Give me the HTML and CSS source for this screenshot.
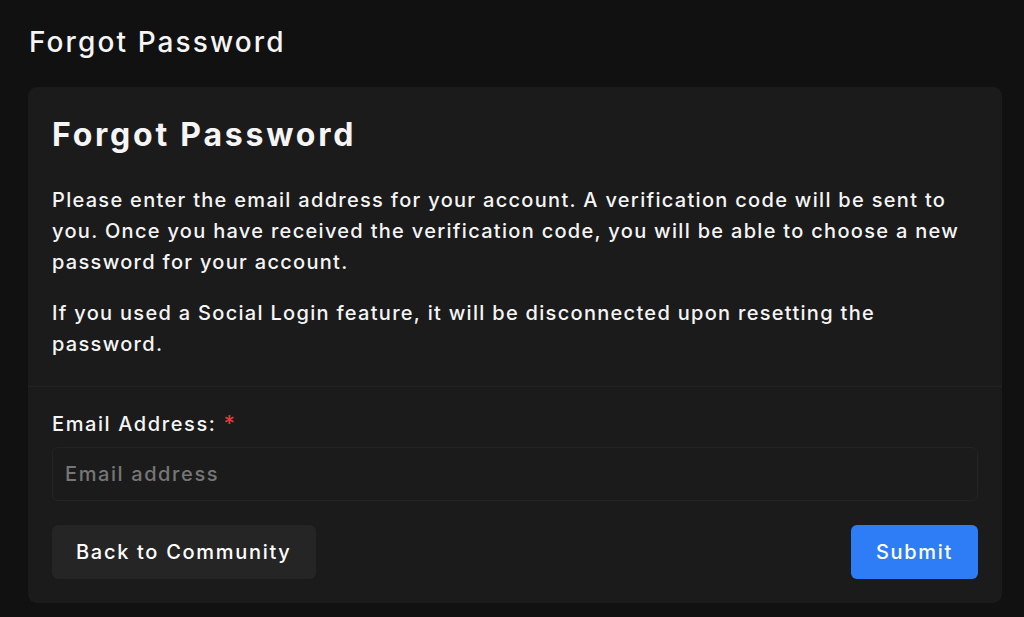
FILE: index.html
```html
<!DOCTYPE html>
<html lang="en">
<head>
<meta charset="utf-8">
<title>Forgot Password</title>
<link rel="stylesheet" href="styles.css">
</head>
<body>
<div class="page">
  <h1 class="page-title">Forgot Password</h1>
  <div class="card">
    <div class="card-body">
      <h2 class="card-title">Forgot Password</h2>
      <p class="text">Please enter the email address for your account. A verification code will be sent to you. Once you have received the verification code, you will be able to choose a new password for your account.</p>
      <p class="text">If you used a Social Login feature, it will be disconnected upon resetting the password.</p>
    </div>
    <div class="card-form">
      <label class="label" for="email">Email Address: <span class="req">*</span></label>
      <input class="input" id="email" type="email" placeholder="Email address">
      <div class="actions">
        <button class="btn btn-secondary" type="button">Back to Community</button>
        <button class="btn btn-primary" type="submit">Submit</button>
      </div>
    </div>
  </div>
</div>
</body>
</html>
```
FILE: styles.css
```css
html, body {
  margin: 0;
  padding: 0;
  background: #111111;
  color: #f5f5f5;
  font-family: Inter, "Noto Sans", sans-serif;
  font-weight: 500;
}
.page {
  padding: 0 22px 0 28px;
}
.page-title {
  margin: 0;
  padding: 22px 0 0 1px;
  font-size: 28px;
  font-weight: 500;
  letter-spacing: 0.075em;
  line-height: 40px;
  height: 65px;
}
.card {
  background: #1b1b1b;
  border-radius: 9px;
}
.card-body {
  padding: 26px 24px 6px 24px;
  border-bottom: 1px solid #232323;
}
.card-title {
  margin: 0 0 28px 0;
  font-size: 32px;
  font-weight: 700;
  letter-spacing: 0.087em;
  line-height: 44px;
}
.text {
  margin: 0 0 20px 0;
  font-size: 20px;
  line-height: 31px;
  letter-spacing: 0.065em;
}
.card-form {
  padding: 21px 24px 24px 24px;
}
.label {
  display: block;
  font-size: 20px;
  line-height: 30px;
  letter-spacing: 0.08em;
  margin-bottom: 8px;
}
.req {
  color: #e23b3b;
  font-size: 22px;
}
.input {
  display: block;
  box-sizing: border-box;
  width: 100%;
  height: 54px;
  padding: 0 12px;
  background: #1b1b1b;
  border: 1px solid #232323;
  border-radius: 6px;
  color: #fff;
  font-family: inherit;
  font-weight: 500;
  font-size: 20px;
  letter-spacing: 0.08em;
  outline: none;
}
.input::placeholder {
  color: #767676;
}
.actions {
  display: flex;
  justify-content: space-between;
  margin-top: 24px;
}
.btn {
  height: 54px;
  border: none;
  border-radius: 6px;
  font-family: inherit;
  font-weight: 500;
  font-size: 20px;
  letter-spacing: 0.085em;
  color: #fff;
  padding: 0 24px;
  cursor: pointer;
}
.btn-secondary {
  background: #252525;
}
.btn-primary {
  background: #2f7df6;
  padding: 0 25px;
}
```
